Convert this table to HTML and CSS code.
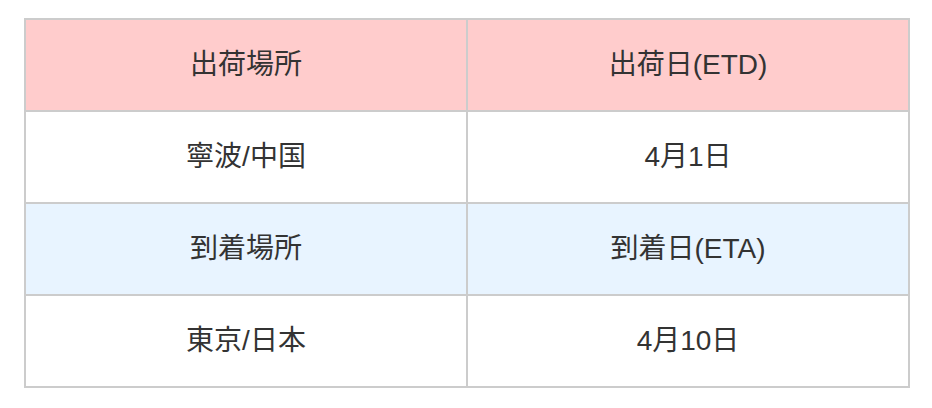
FILE: index.html
```html
<!DOCTYPE html>
<html lang="ja">
<head>
<meta charset="utf-8">
<title>出荷情報</title>
<link rel="stylesheet" href="styles.css">
</head>
<body>
<table class="ship-table">
  <tbody>
    <tr class="row-head">
      <td>出荷場所</td>
      <td>出荷日(ETD)</td>
    </tr>
    <tr class="row-plain">
      <td>寧波/中国</td>
      <td>4月1日</td>
    </tr>
    <tr class="row-blue">
      <td>到着場所</td>
      <td>到着日(ETA)</td>
    </tr>
    <tr class="row-plain">
      <td>東京/日本</td>
      <td>4月10日</td>
    </tr>
  </tbody>
</table>
</body>
</html>
```

FILE: styles.css
```css
html, body {
  margin: 0;
  padding: 0;
  background: #ffffff;
}

body {
  padding: 18px 0 0 24px;
  font-family: "Liberation Sans", "Noto Sans CJK JP", sans-serif;
  color: #333333;
}

.ship-table {
  width: 886px;
  table-layout: fixed;
  border-collapse: separate;
  border-spacing: 0;
  border: 1px solid #cccccc;
}

.ship-table td {
  box-sizing: border-box;
  width: 50%;
  height: 92px;
  padding: 0;
  border: 1px solid #cccccc;
  text-align: center;
  vertical-align: middle;
  font-size: 28px;
  line-height: 1.2;
}

.row-head td {
  background: #ffcccc;
}

.row-plain td {
  background: #ffffff;
}

.row-blue td {
  background: #e8f4ff;
}
```
